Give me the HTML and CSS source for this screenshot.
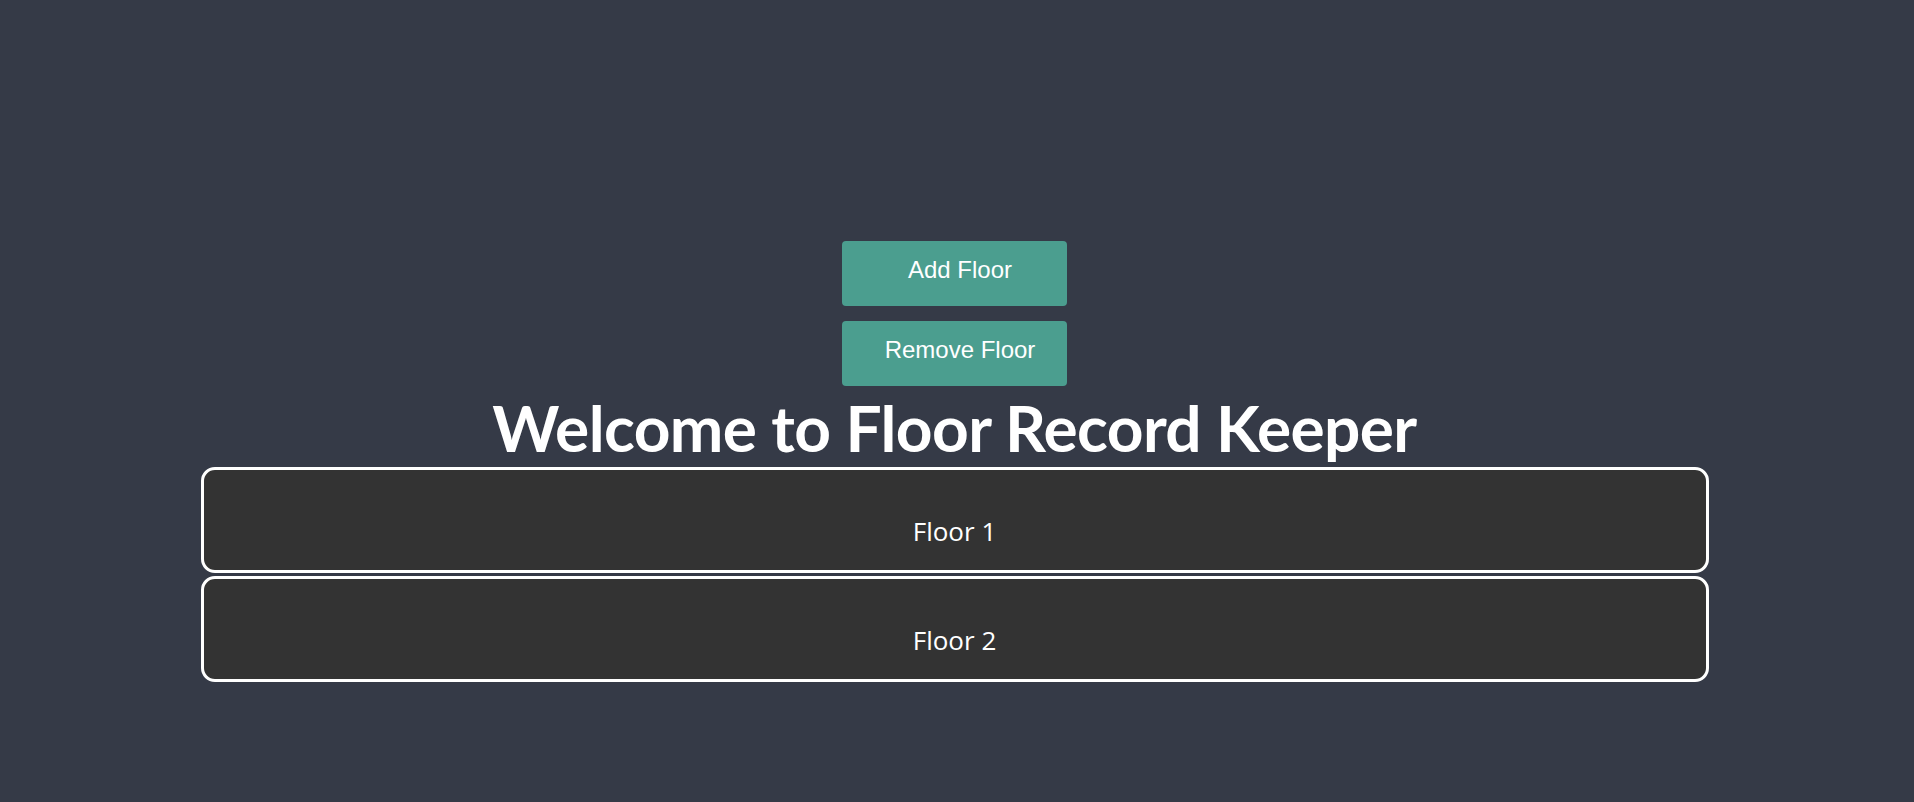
FILE: index.html
```html
<!DOCTYPE html>
<html lang="en">
<head>
<meta charset="utf-8">
<title>Floor Record Keeper</title>
<link rel="stylesheet" href="styles.css">
</head>
<body>
<div class="page">
  <div class="controls">
    <button class="btn">Add Floor</button>
    <button class="btn">Remove Floor</button>
  </div>
  <h1 class="title">Welcome to Floor Record Keeper</h1>
  <div class="floors">
    <div class="floor">Floor 1</div>
    <div class="floor">Floor 2</div>
  </div>
</div>
</body>
</html>
```

FILE: styles.css
```css
html, body {
  margin: 0;
  padding: 0;
  background: #353a47;
  height: 100%;
}

.page {
  width: 1909px;
  display: flex;
  flex-direction: column;
  align-items: center;
  padding-top: 241px;
}

.controls {
  display: flex;
  flex-direction: column;
  gap: 15px;
}

.btn {
  width: 225px;
  height: 65px;
  border: none;
  border-radius: 4px;
  background: #4b9e8f;
  color: #ffffff;
  font-family: "Liberation Sans", Arial, sans-serif;
  font-size: 24px;
  padding: 0 0 8px 11px;
  cursor: pointer;
}

.title {
  margin: 10px 0 7px 0;
  font-family: Lato, "Open Sans", sans-serif;
  font-weight: 700;
  font-size: 64px;
  line-height: 64px;
  letter-spacing: -0.6px;
  color: #ffffff;
  position: relative;
  z-index: 0;
}

.floors {
  display: flex;
  flex-direction: column;
  gap: 3px;
  position: relative;
  z-index: 1;
}

.floor {
  box-sizing: border-box;
  width: 1508px;
  height: 106px;
  padding-top: 43px;
  border: 3px solid #ffffff;
  border-radius: 14px;
  background: #333333;
  color: #ffffff;
  text-align: center;
  font-family: "Open Sans", "Noto Sans", sans-serif;
  font-size: 26px;
}
```
